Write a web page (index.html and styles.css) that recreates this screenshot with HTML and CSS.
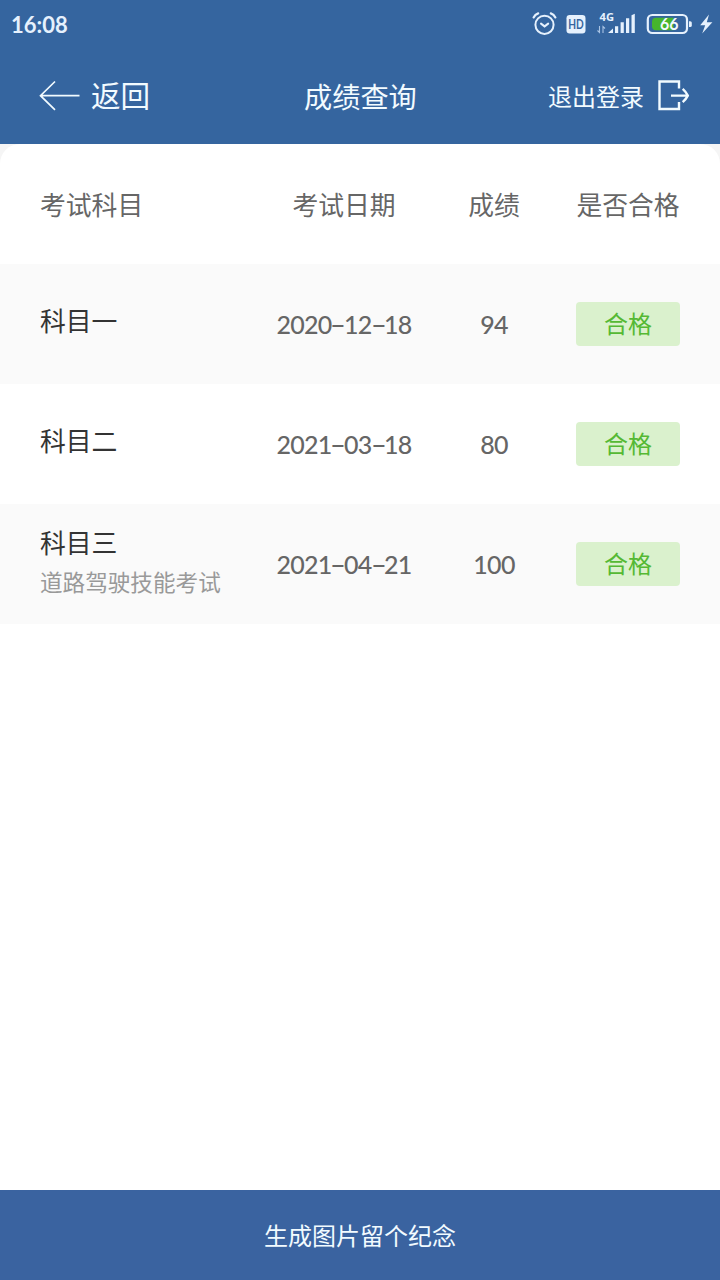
FILE: index.html
```html
<!DOCTYPE html>
<html lang="zh-CN">
<head>
<meta charset="utf-8">
<title>成绩查询</title>
<link rel="stylesheet" href="styles.css">
</head>
<body>
<div class="screen">
  <div class="status">
    <span class="clock">16:08</span>
    <svg class="status-icons" width="190" height="30" viewBox="530 9 190 30">
      <g fill="none" stroke="#e6f1fd" stroke-linecap="round">
        <circle cx="544.5" cy="24.8" r="9.1" stroke-width="2"/>
        <path d="M541 23.6l3.6 2.8 3.6-2.8" stroke-width="2"/>
        <path d="M533.6 17.4q1.5-3 4.6-4M555.4 17.4q-1.5-3-4.6-4" stroke-width="2.2"/>
      </g>
      <rect x="566.5" y="15" width="19" height="18.5" rx="3.2" fill="#e6f1fd"/>
      <text class="hd" x="576" y="28.8" text-anchor="middle" textLength="15.5" lengthAdjust="spacingAndGlyphs">HD</text>
      <text class="net" x="599.5" y="20.8" textLength="14.5" lengthAdjust="spacingAndGlyphs">4G</text>
      <path d="M597.5 30.5l2 2V26M605 28.5l-2-2V33" fill="none" stroke="#a9c4e4" stroke-width="1.1"/>
      <path d="M608 33l5-4.5V33zM615 26.2h3.2V33H615zM620.6 22.2h3.2V33h-3.2zM626 18.2h3.2V33H626zM631.5 15.3l3.3-1.6V33h-3.3z" fill="#e6f1fd"/>
      <rect x="647.8" y="15" width="39.2" height="18" rx="4.5" fill="none" stroke="#e6f1fd" stroke-width="2.2"/>
      <path d="M656 17.8h17.5v12.4H656a4 4 0 0 1-4-4v-4.4a4 4 0 0 1 4-4z" fill="#46b52c"/>
      <path d="M689 21.2h1.2q1.6 0 1.6 1.6v2.6q0 1.6-1.6 1.6H689z" fill="#e6f1fd"/>
      <text class="level" x="669.2" y="30" text-anchor="middle" textLength="18.5" lengthAdjust="spacingAndGlyphs">66</text>
      <path d="M709 14.6l-8.8 10.6h5l-3 8.2 10.2-11.2h-5.6z" fill="#e6f1fd"/>
    </svg>
  </div>
  <header class="nav">
    <a class="back">
      <svg width="42" height="32" viewBox="0 0 42 32"><path d="M16 1.5L1.5 15.7 16 29.8M1.5 15.7H40.5" fill="none" stroke="#f2fbff" stroke-width="1.7"/></svg>
      <span>返回</span>
    </a>
    <h1 class="title">成绩查询</h1>
    <a class="logout">
      <span>退出登录</span>
      <svg width="34" height="34" viewBox="657 79 34 34"><path d="M679 88.5V81.5H659.5V109H679V102M671 95.6H688M682.7 88.8Q685.8 91.5 687.8 95.6Q685.8 99.5 682.7 102.2" fill="none" stroke="#f2fbff" stroke-width="2.4"/></svg>
    </a>
  </header>
  <main class="content">
    <div class="sheet">
      <div class="row head"><span>考试科目</span><span>考试日期</span><span>成绩</span><span>是否合格</span></div>
      <div class="row shaded">
        <div class="subject"><b>科目一</b></div>
        <span class="num date">2020<i class="dash">-</i>12<i class="dash">-</i>18</span><span class="num">94</span><span class="badge">合格</span>
      </div>
      <div class="row">
        <div class="subject"><b>科目二</b></div>
        <span class="num date">2021<i class="dash">-</i>03<i class="dash">-</i>18</span><span class="num">80</span><span class="badge">合格</span>
      </div>
      <div class="row shaded">
        <div class="subject full"><b>科目三</b><small>道路驾驶技能考试</small></div>
        <span class="num date">2021<i class="dash">-</i>04<i class="dash">-</i>21</span><span class="num">100</span><span class="badge">合格</span>
      </div>
    </div>
  </main>
  <footer class="save">生成图片留个纪念</footer>
</div>
</body>
</html>
```
FILE: styles.css
```css
* { box-sizing: border-box; }
body {
  margin: 0;
  font-family: "Noto Sans CJK SC", sans-serif;
  color: #666;
}
.screen {
  display: flex;
  flex-direction: column;
  width: 720px;
  height: 1280px;
  overflow: hidden;
  background: #35659f;
}
.status {
  display: flex;
  justify-content: space-between;
  align-items: center;
  height: 48px;
  padding-left: 11px;
}
.clock {
  padding-top: 1px;
  font: bold 22px/30px Lato, sans-serif;
  letter-spacing: 0;
  color: #e6f1fd;
}
.hd { font: bold 13px Lato, sans-serif; fill: #35659f; }
.net { font: bold 11px "Open Sans", sans-serif; fill: #e6f1fd; }
.level { font: bold 17px Lato, sans-serif; fill: #f2faff; }
.nav {
  display: grid;
  grid-template-columns: 1fr 120px 1fr;
  align-items: center;
  height: 96px;
  padding: 0 29px 0 39px;
  color: #f2fbff;
}
.back, .logout { display: flex; align-items: center; }
.back { gap: 10px; font-size: 29.6px; line-height: 36px; }
.back span { padding-bottom: 2px; }
.title { margin: 0 -10px 0 -1px; font-size: 28.2px; font-weight: 400; line-height: 36px; white-space: nowrap; }
.logout { justify-content: flex-end; gap: 13px; font-size: 24px; line-height: 32px; }
.content { flex: 1; background: #f5f5f5; }
.sheet { height: 100%; border-radius: 20px 20px 0 0; background: #fff; overflow: hidden; }
.row {
  display: grid;
  grid-template-columns: 224px 160px 140px 128px;
  align-items: center;
  justify-items: center;
  height: 120px;
  padding: 0 28px 0 40px;
}
.row > :first-child { justify-self: start; }
.head { font-size: 25.8px; line-height: 36px; }
.shaded { background: #fafafa; }
.subject { display: flex; flex-direction: column; padding-bottom: 8px; }
.subject b { font-size: 25.8px; font-weight: 400; line-height: 40px; color: #333; }
.subject small { font-size: 22.6px; line-height: 40px; color: #999; }
.subject.full { padding-bottom: 4px; }
.num { font: 500 25px/36px Lato, sans-serif; letter-spacing: -0.7px; white-space: nowrap; }
.date { letter-spacing: -0.75px; }
.dash { display: inline-block; width: 12.5px; font-style: normal; text-align: center; transform: scaleX(1.75); }
.badge {
  width: 104px;
  height: 44px;
  border-radius: 4px;
  background: #daf1cd;
  color: #55b934;
  font-size: 24px;
  line-height: 42px;
  text-align: center;
}
.save {
  height: 90px;
  background: #3a63a0;
  color: #f2fbff;
  font-size: 24px;
  line-height: 90px;
  text-align: center;
}
```
